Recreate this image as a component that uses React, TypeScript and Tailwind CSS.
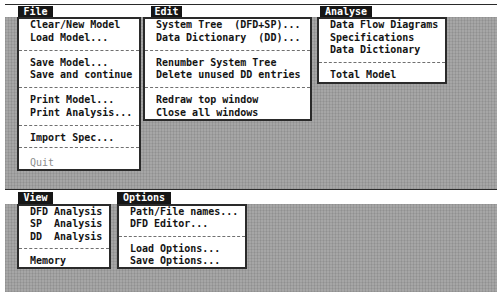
import React from 'react'

// '-' marks a dashed separator, '~' a separator with the line near its top
type Entry = string

const FILE_ITEMS: Entry[] = [
  'Clear/New Model',
  'Load Model...',
  '-',
  'Save Model...',
  'Save and continue',
  '-',
  'Print Model...',
  'Print Analysis...',
  '-',
  'Import Spec...',
  '~',
  '!Quit',
]

const EDIT_ITEMS: Entry[] = [
  'System Tree  (DFD+SP)...',
  'Data Dictionary  (DD)...',
  '-',
  'Renumber System Tree',
  'Delete unused DD entries',
  '-',
  'Redraw top window',
  'Close all windows',
]

const ANALYSE_ITEMS: Entry[] = ['Data Flow Diagrams', 'Specifications', 'Data Dictionary', '-', 'Total Model']

const VIEW_ITEMS: Entry[] = ['DFD Analysis', 'SP  Analysis', 'DD  Analysis', '-', 'Memory']

const OPTIONS_ITEMS: Entry[] = ['Path/File names...', 'DFD Editor...', '-', 'Load Options...', 'Save Options...']

const gray =
  'bg-[#a6a6a6] bg-[linear-gradient(90deg,rgba(0,0,0,0.08)_1px,transparent_1px),linear-gradient(rgba(0,0,0,0.06)_1px,transparent_1px)] bg-[length:3px_3px]'

function Dropdown({ items, className, rowClass }: { items: Entry[]; className: string; rowClass: string }) {
  return (
    <div className={`bg-white border-2 border-[#2a2a2a] flex flex-col ${className}`}>
      {items.map((it, i) => {
        if (it === '-') {
          return (
            <div key={i} className={`${rowClass} flex items-center`}>
              <div className="w-full border-t border-dashed border-[#707070]" />
            </div>
          )
        }
        if (it === '~') {
          return (
            <div key={i} className={`${rowClass} flex items-start pt-[3px]`}>
              <div className="w-full border-t border-dashed border-[#707070]" />
            </div>
          )
        }
        const disabled = it.startsWith('!')
        return (
          <div
            key={i}
            className={`${rowClass} pl-[11px] flex items-center whitespace-pre ${disabled ? 'text-[#8c8c8c] font-normal' : 'text-[#141414]'}`}
          >
            {disabled ? it.slice(1) : it}
          </div>
        )
      })}
    </div>
  )
}

function Title({ label, className }: { label: string; className: string }) {
  return (
    <div className={`bg-[#161616] text-white flex items-center justify-center leading-none ${className}`}>
      {label}
    </div>
  )
}

export default function App() {
  return (
    <div className="w-[500px] h-[295px] bg-white pl-[5px] pr-[3px] pt-[4px] flex flex-col font-['DejaVu_Sans_Mono',monospace] text-[10px] font-bold leading-none">
      {/* first screen */}
      <section className="h-[185px] flex flex-col">
        <div className="h-[13px] border-t border-[#2a2a2a] bg-white flex items-end">
          <Title label="File" className="ml-[13px] w-[35px] h-[11px]" />
          <Title label="Edit" className="ml-[98px] w-[31px] h-[11px]" />
          <Title label="Analyse" className="ml-[138px] w-[52px] h-[11px]" />
        </div>
        <div className={`flex-1 flex items-start ${gray}`}>
          <Dropdown items={FILE_ITEMS} rowClass="h-[12.5px]" className="ml-[12px] w-[124px]" />
          <Dropdown items={EDIT_ITEMS} rowClass="h-[12.5px]" className="ml-[2px] w-[169px]" />
          <Dropdown items={ANALYSE_ITEMS} rowClass="h-[12.5px]" className="ml-[5px] w-[130px]" />
        </div>
      </section>

      {/* second screen */}
      <section className="h-[103px] flex flex-col">
        <div className="h-[15px] border-t border-[#2a2a2a] bg-white flex items-end">
          <Title label="View" className="ml-[13px] w-[35px] h-[12px]" />
          <Title label="Options" className="ml-[64px] w-[54px] h-[12px]" />
        </div>
        <div className={`flex-1 flex items-start ${gray}`}>
          <Dropdown items={VIEW_ITEMS} rowClass="h-[12.25px]" className="ml-[12px] w-[94px]" />
          <Dropdown items={OPTIONS_ITEMS} rowClass="h-[12.25px]" className="ml-[6px] w-[130px]" />
        </div>
      </section>
    </div>
  )
}
